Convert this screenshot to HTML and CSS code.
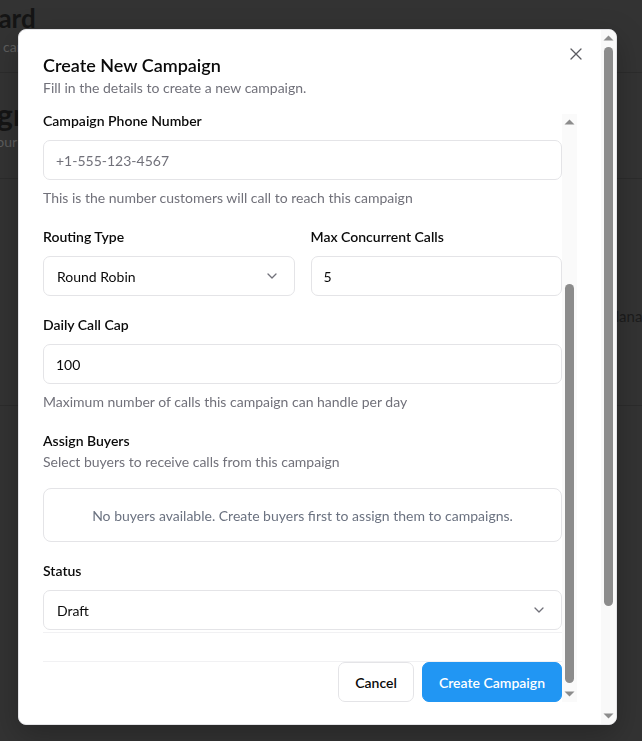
FILE: index.html
```html
<!DOCTYPE html>
<html lang="en">
<head>
<meta charset="utf-8">
<title>Create New Campaign</title>
<link rel="stylesheet" href="styles.css">
</head>
<body>
<div class="page">
  <header class="page-head">
    <h1 class="page-title">Dashboard</h1>
    <p class="page-sub">campaign performance overview</p>
  </header>
  <section class="page-section">
    <h2 class="section-title">Campaign Management</h2>
    <p class="section-sub">Manage your campaigns</p>
  </section>
  <section class="page-cards">
    <p class="cards-note">Manage</p>
  </section>
</div>

<div class="modal" role="dialog" aria-labelledby="dlg-title">
  <div class="modal-body">
    <button class="close" aria-label="Close">
      <svg width="12" height="12" viewBox="0 0 12 12"><path d="M1 1L11 11M11 1L1 11" stroke="#3f3f46" stroke-width="1.3" stroke-linecap="round"/></svg>
    </button>
    <div class="modal-head">
      <h2 class="modal-title" id="dlg-title">Create New Campaign</h2>
      <p class="modal-sub">Fill in the details to create a new campaign.</p>
    </div>

    <div class="scroll">
      <div class="scroll-content">
        <div class="form">
          <div class="field">
            <label class="label">Campaign Phone Number</label>
            <input class="input" placeholder="+1-555-123-4567">
            <p class="hint">This is the number customers will call to reach this campaign</p>
          </div>
          <div class="row">
            <div class="field">
              <label class="label">Routing Type</label>
              <div class="input select">
                <span>Round Robin</span>
                <svg class="chev" width="16" height="16" viewBox="0 0 16 16"><path d="M4 6l4 4 4-4" fill="none" stroke="#71717a" stroke-width="1.3" stroke-linecap="round" stroke-linejoin="round"/></svg>
              </div>
            </div>
            <div class="field">
              <label class="label">Max Concurrent Calls</label>
              <input class="input" value="5">
            </div>
          </div>
          <div class="field">
            <label class="label">Daily Call Cap</label>
            <input class="input" value="100">
            <p class="hint">Maximum number of calls this campaign can handle per day</p>
          </div>
          <div class="field">
            <label class="label">Assign Buyers</label>
            <p class="desc">Select buyers to receive calls from this campaign</p>
            <div class="empty">No buyers available. Create buyers first to assign them to campaigns.</div>
          </div>
          <div class="field">
            <label class="label">Status</label>
            <div class="input select">
              <span>Draft</span>
              <svg class="chev" width="16" height="16" viewBox="0 0 16 16"><path d="M4 6l4 4 4-4" fill="none" stroke="#71717a" stroke-width="1.3" stroke-linecap="round" stroke-linejoin="round"/></svg>
            </div>
          </div>
        </div>
        <div class="footer">
          <button class="btn btn-outline">Cancel</button>
          <button class="btn btn-primary">Create Campaign</button>
        </div>
      </div>
      <div class="sbar inner-bar">
        <span class="sbar-btn"><svg width="15" height="15" viewBox="0 0 15 15"><path d="M2.5 10.5h10L7.5 5.5z" fill="#8c8c8c"/></svg></span>
        <div class="sbar-track inner-track"><div class="sbar-thumb inner-thumb"></div></div>
        <span class="sbar-btn"><svg width="15" height="15" viewBox="0 0 15 15"><path d="M2.5 4.5h10L7.5 9.5z" fill="#8c8c8c"/></svg></span>
      </div>
    </div>
  </div>
  <div class="sbar modal-bar">
    <span class="sbar-btn"><svg width="15" height="15" viewBox="0 0 15 15"><path d="M2.5 10.5h10L7.5 5.5z" fill="#8c8c8c"/></svg></span>
    <div class="sbar-track modal-track"><div class="sbar-thumb modal-thumb"></div></div>
    <span class="sbar-btn"><svg width="15" height="15" viewBox="0 0 15 15"><path d="M2.5 4.5h10L7.5 9.5z" fill="#8c8c8c"/></svg></span>
  </div>
</div>
</body>
</html>
```
FILE: styles.css
```css
* { box-sizing: border-box; margin: 0; padding: 0; }
html, body { height: 100%; }
body {
  background: #333333;
  font-family: Lato, "Segoe UI", "Noto Sans", sans-serif;
  color: #0a0a0a;
  overflow: hidden;
}

/* background page (dimmed) */
.page-head {
  height: 73px;
  border-bottom: 1px solid #2c2c2c;
  padding-top: 2px;
}
.page-title {
  font-size: 26px;
  line-height: 32px;
  font-weight: 700;
  color: #151515;
  margin-left: -90px;
  white-space: nowrap;
}
.page-sub {
  font-size: 14px;
  line-height: 20px;
  color: #5e5e5e;
  margin-top: 3px;
  margin-left: 3px;
  white-space: nowrap;
}
.page-section {
  height: 106px;
  border-bottom: 1px solid #2c2c2c;
  padding-top: 24px;
}
.section-title {
  font-size: 30px;
  line-height: 34px;
  font-weight: 700;
  color: #151515;
  margin-left: -103px;
  white-space: nowrap;
}
.section-sub {
  font-size: 14px;
  line-height: 20px;
  color: #5e5e5e;
  margin-top: 1px;
  margin-left: -63px;
  white-space: nowrap;
}
.page-cards {
  height: 227px;
  border-bottom: 1px solid #2c2c2c;
  padding-top: 127px;
  display: flex;
  justify-content: flex-end;
}
.cards-note {
  font-size: 15px;
  line-height: 20px;
  color: #1c1c1c;
  margin-right: -16px;
}

/* modal */
.modal {
  position: fixed;
  top: 29px;
  left: 18px;
  width: 599px;
  height: 696px;
  background: #ffffff;
  border: 1px solid #e4e4e7;
  border-radius: 8px;
  overflow: hidden;
  display: flex;
  box-shadow: 0 10px 30px rgba(0,0,0,0.25);
}
.modal-body {
  position: relative;
  flex: 1;
  min-width: 0;
  padding: 24px;
}
.close {
  position: absolute;
  top: 18px;
  right: 19px;
  width: 12px;
  height: 12px;
  border: 0;
  background: none;
  display: flex;
  opacity: 0.85;
}
.modal-head { display: flex; flex-direction: column; gap: 2px; }
.modal-title {
  font-size: 18px;
  line-height: 22px;
  font-weight: 600;
  color: #0a0a0a;
}
.modal-sub {
  font-size: 14px;
  line-height: 20px;
  color: #71717a;
}

/* scroll area with its scrollbar */
.scroll {
  margin-top: 13px;
  height: 591px;
  display: flex;
}
.scroll-content {
  flex: 1;
  min-width: 0;
  overflow: hidden;
}

.sbar {
  width: 15px;
  flex: none;
  display: flex;
  flex-direction: column;
  background: #fafafa;
}
.inner-bar { margin-top: 3px; }
.sbar-btn { display: flex; height: 15px; flex: none; }
.sbar-track { flex: 1; display: flex; flex-direction: column; align-items: center; }
.sbar-thumb {
  width: 9px;
  background: #8c8c8c;
  border-radius: 5px;
}
.inner-track { padding-top: 155px; }
.inner-thumb { height: 399px; }
.modal-track { padding-top: 2px; }
.modal-thumb { height: 559px; }
.modal-bar { background: #f9f9f9; }

.form {
  display: flex;
  flex-direction: column;
  gap: 19px;
  padding-bottom: 2px;
  border-bottom: 1px solid #f1f1f3;
}
.field { display: flex; flex-direction: column; }
.row {
  display: grid;
  grid-template-columns: 1fr 1fr;
  gap: 16px;
}
.label {
  font-size: 14px;
  line-height: 20px;
  font-weight: 600;
  color: #0a0a0a;
  margin-bottom: 9px;
}
.input {
  height: 40px;
  width: 100%;
  border: 1px solid #e4e4e7;
  border-radius: 7px;
  padding: 0 12px;
  font-family: inherit;
  font-size: 14px;
  color: #0a0a0a;
  background: #fff;
  outline: none;
}
.input::placeholder { color: #71717a; }
.select {
  display: flex;
  align-items: center;
  justify-content: space-between;
  padding: 0 14px 0 13px;
}
.chev { flex: none; }
.hint {
  font-size: 14px;
  line-height: 20px;
  color: #71717a;
  margin-top: 8px;
}
.desc {
  font-size: 14px;
  line-height: 20px;
  color: #71717a;
  margin-top: -8px;
}
.empty {
  margin-top: 16px;
  height: 54px;
  border: 1px solid #e4e4e7;
  border-radius: 8px;
  display: flex;
  align-items: center;
  justify-content: center;
  font-size: 14px;
  color: #6b7280;
}
.footer {
  margin-top: 28px;
  border-top: 1px solid #f1f1f3;
  display: flex;
  justify-content: flex-end;
  gap: 8px;
}
.btn {
  height: 40px;
  padding: 0 16px;
  border-radius: 7px;
  font-family: inherit;
  font-size: 14px;
  font-weight: 600;
  cursor: pointer;
}
.btn-outline {
  background: #fff;
  border: 1px solid #e4e4e7;
  color: #0a0a0a;
}
.btn-primary {
  background: #2196f3;
  border: 1px solid #2196f3;
  color: #fff;
}
```
